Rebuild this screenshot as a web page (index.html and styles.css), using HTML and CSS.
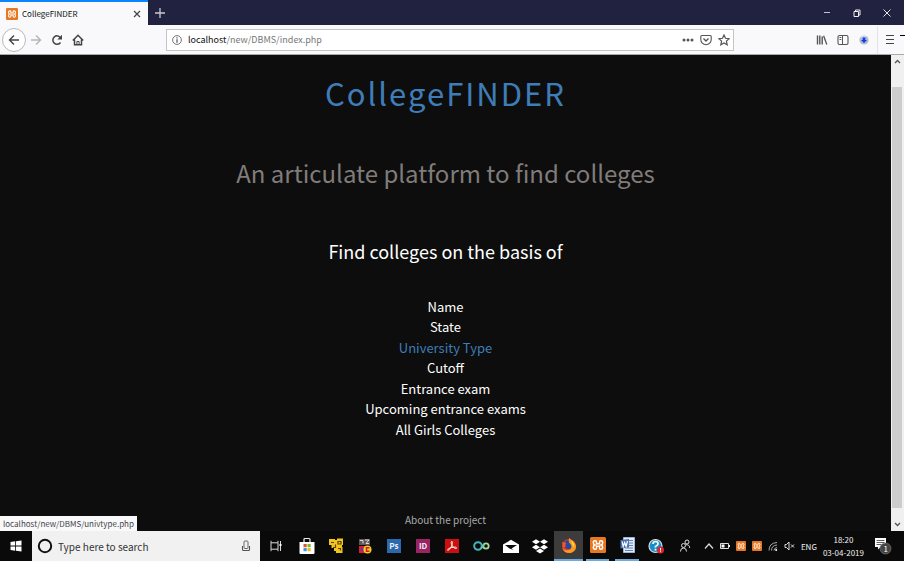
FILE: index.html
```html
<!DOCTYPE html>
<html lang="en">
<head>
<meta charset="utf-8">
<title>CollegeFINDER</title>
<link rel="stylesheet" href="styles.css">
</head>
<body>
<svg class="defs" aria-hidden="true">
  <symbol id="xampp" viewBox="0 0 16 16">
    <rect width="16" height="16" rx="1.500" fill="#e87722"/>
    <path d="M6.500 6.500V5Q6.500 3.800 5.300 3.800 3.300 3.800 3.300 5.500 3.300 7.500 5 8 3.300 8.500 3.300 10.500 3.300 12.200 5.300 12.200 6.500 12.200 6.500 11V9.500Q8 8.800 9.500 9.500V11Q9.500 12.200 10.700 12.200 12.700 12.200 12.700 10.500 12.700 8.500 11 8 12.700 7.500 12.700 5.500 12.700 3.800 10.700 3.800 9.500 3.800 9.500 5V6.500Q8 7.200 6.500 6.500Z" fill="none" stroke="#fff" stroke-width="1.400"/>
  </symbol>
</svg>
<div class="desktop">
  <header class="tabbar">
    <div class="tab">
      <svg class="favicon"><use href="#xampp"/></svg>
      <span class="tab-title">CollegeFINDER</span>
      <button class="plain" aria-label="Close tab"><svg width="8" height="8" viewBox="0 0 8 8"><path d="M1 1l6 6M7 1L1 7" stroke="#444" stroke-width="1.200"/></svg></button>
    </div>
    <button class="plain new-tab" aria-label="New tab"><svg width="10" height="10" viewBox="0 0 10 10"><path d="M5 0v10M0 5h10" stroke="#c9c9d2" stroke-width="1.300"/></svg></button>
    <div class="window-buttons">
      <button class="plain" aria-label="Minimize"><svg width="8" height="8" viewBox="0 0 8 8"><path d="M1 3.500h6" stroke="#c4c4cf"/></svg></button>
      <button class="plain" aria-label="Restore"><svg width="8" height="8" viewBox="0 0 8 8"><path d="M1 2.500h4.500v5H1zM2.500 2.500v-1.500h4.500v5H5.500" fill="none" stroke="#f0f0f4"/></svg></button>
      <button class="plain" aria-label="Close"><svg width="8" height="8" viewBox="0 0 8 8"><path d="M.5.5l7 7M7.500.5l-7 7" stroke="#e4e4ec"/></svg></button>
    </div>
  </header>
  <nav class="toolbar">
    <div class="nav-buttons">
      <button class="plain back" aria-label="Back"><svg width="12" height="12" viewBox="0 0 12 12"><path d="M11 6H1.500M6 1.500L1.500 6 6 10.500" fill="none" stroke="#444" stroke-width="1.400"/></svg></button>
      <button class="plain" aria-label="Forward"><svg width="12" height="12" viewBox="0 0 12 12"><path d="M1 6h9.500M6 1.500L10.500 6 6 10.500" fill="none" stroke="#b5b5b8" stroke-width="1.400"/></svg></button>
      <button class="plain" aria-label="Reload"><svg width="12" height="12" viewBox="0 0 12 12"><path d="M9.500 8.500A4.200 4.200 0 1 1 9.600 3.800" fill="none" stroke="#444" stroke-width="1.500"/><path d="M11 .8v4.700H6.300z" fill="#444"/></svg></button>
      <button class="plain" aria-label="Home"><svg width="12" height="12" viewBox="0 0 12 12"><path d="M.8 6.500L6 1.300l5.200 5.200M2.500 5.500v5.300h7V5.500" fill="none" stroke="#444" stroke-width="1.500"/><path d="M4.900 11V7.500h2.200V11" fill="none" stroke="#444"/></svg></button>
    </div>
    <div class="urlbar">
      <svg width="10" height="10" viewBox="0 0 10 10"><circle cx="5" cy="5" r="4.400" fill="none" stroke="#666" stroke-width=".9"/><path d="M5 2.300v1.200M5 4.300v3.400" stroke="#555" stroke-width="1.200"/></svg>
      <span class="url"><b>localhost</b>/new/DBMS/index.php</span>
      <button class="plain" aria-label="Page actions"><svg width="12" height="10" viewBox="0 0 12 10"><circle cx="2" cy="5" r="1.500" fill="#555"/><circle cx="6" cy="5" r="1.500" fill="#555"/><circle cx="10" cy="5" r="1.500" fill="#555"/></svg></button>
      <button class="plain" aria-label="Save to Pocket"><svg width="12" height="12" viewBox="0 0 12 12"><path d="M1.800 1.500h8.400q1 0 1 1v3A5.200 5.200 0 0 1 .8 5.500v-3q0-1 1-1z" fill="none" stroke="#555" stroke-width="1.100"/><path d="M3.500 4.500L6 7l2.500-2.500" fill="none" stroke="#555" stroke-width="1.400"/></svg></button>
      <button class="plain" aria-label="Bookmark"><svg width="12" height="12" viewBox="0 0 12 12"><path d="M6 1l1.500 3.300 3.600.4-2.700 2.400.8 3.600L6 8.900l-3.200 1.800.8-3.600L.9 4.700l3.600-.4z" fill="none" stroke="#555" stroke-width="1.200"/></svg></button>
    </div>
    <div class="tools">
      <button class="plain" aria-label="Library"><svg width="12" height="12" viewBox="0 0 12 12"><path d="M1.500 1.500v9M3.800 1.500v9M6.200 2.500v8" stroke="#555" stroke-width="1.400"/><path d="M7.600 1.800l3.200 8.700" stroke="#555" stroke-width="1.300"/></svg></button>
      <button class="plain" aria-label="Sidebar"><svg width="12" height="12" viewBox="0 0 12 12"><rect x="1" y="1.500" width="10" height="9" rx="1.500" fill="none" stroke="#555" stroke-width="1.100"/><path d="M5.500 1.500v9M2.500 3.500h1.800M2.500 5.500h1.800" stroke="#555"/></svg></button>
      <button class="plain" aria-label="Extension"><svg width="12" height="12" viewBox="0 0 12 12"><circle cx="6" cy="6" r="4.600" fill="#a9bed2"/><path d="M3 3.500a4 4 0 0 1 5-1" stroke="#dce9f0" fill="none"/><path d="M4.700 3.500h2.600V6h1.700L6 9 3 6h1.700z" fill="#1c35e8"/></svg></button>
      <button class="plain menu" aria-label="Menu"><svg width="12" height="12" viewBox="0 0 12 12"><path d="M2 1.500h8M2 5.500h8M2 9.500h8" stroke="#444" stroke-width="1.100"/></svg></button>
    </div>
  </nav>
  <div class="viewport">
    <main class="page">
      <h1>CollegeFINDER</h1>
      <h2>An articulate platform to find colleges</h2>
      <h3>Find colleges on the basis of</h3>
      <ul class="criteria">
        <li><a href="#name">Name</a></li>
        <li><a href="#state">State</a></li>
        <li><a class="hovered" href="#type">University Type</a></li>
        <li><a href="#cutoff">Cutoff</a></li>
        <li><a href="#exam">Entrance exam</a></li>
        <li><a href="#upcoming">Upcoming entrance exams</a></li>
        <li><a href="#girls">All Girls Colleges</a></li>
      </ul>
      <a class="about" href="#about">About the project</a>
    </main>
    <div class="scrollbar">
      <svg class="up" width="7" height="5" viewBox="0 0 7 5"><path d="M1 4l2.500-2.500L6 4" fill="none" stroke="#555" stroke-width="1.300"/></svg>
      <div class="thumb"></div>
      <svg class="down" width="7" height="5" viewBox="0 0 7 5"><path d="M1 1l2.500 2.500L6 1" fill="none" stroke="#555" stroke-width="1.300"/></svg>
    </div>
    <div class="status">localhost/new/DBMS/univtype.php</div>
  </div>
  <footer class="taskbar">
    <button class="plain start" aria-label="Start"><svg width="12" height="12" viewBox="0 0 12 12"><path d="M.5 2l4.700-.7v4.300H.5zM6 1.200L11.500.5v5.100H6zM.5 6.400h4.700v4.300L.5 10zM6 6.400h5.500v5.100L6 10.800z" fill="#fff"/></svg></button>
    <label class="search">
      <svg width="16" height="16" viewBox="0 0 16 16"><circle cx="8" cy="8" r="6.200" fill="none" stroke="#111" stroke-width="2"/></svg>
      <input type="text" placeholder="Type here to search">
      <svg width="10" height="12" viewBox="0 0 10 12"><rect x="3" y="1" width="4" height="7.500" rx="1" fill="none" stroke="#666"/><path d="M1.500 6v3.500q0 1 1 1h5q1 0 1-1V6" fill="none" stroke="#555" stroke-width="1.100"/></svg>
    </label>
    <button class="plain taskview" aria-label="Task view"><svg width="12" height="12" viewBox="0 0 12 12"><path d="M1 .8v2h7v-2M1 11.200v-2h7v2M1 3v6M8 3v6M10.500 1v10" fill="none" stroke="#ddd"/><path d="M9.500 4h2v2h-2z" fill="#fff"/></svg></button>
    <div class="apps">
      <button class="plain" aria-label="Store"><svg width="16" height="18" viewBox="0 0 16 18"><path d="M5 5V2.500q0-1 1-1h4q1 0 1 1V5" fill="none" stroke="#eee" stroke-width="1.200"/><path d="M.5 5h15v11q0 1-1 1h-13q-1 0-1-1z" fill="#fff"/><path d="M4.500 7h3.200v3.200H4.500z" fill="#e8502a"/><path d="M8.500 7h3.200v3.200H8.500z" fill="#7fb92a"/><path d="M4.500 11h3.200v3.200H4.500z" fill="#2aa0e0"/><path d="M8.500 11h3.200v3.200H8.500z" fill="#f5b81e"/></svg></button>
      <button class="plain" aria-label="VMware"><svg width="16" height="18" viewBox="0 0 16 18"><path d="M1 2h6v1h2V1.500h6V8h-1v2h.5v6H8v-2H6v-3H3.500V8H1z" fill="#f3c51c"/><path d="M3 5.500h3M10 4.500h3v2.500h-3zM7.500 7.500v3H5M10 11.500h2.500v2" fill="none" stroke="#5a430b" stroke-width="1.200"/></svg></button>
      <button class="plain" aria-label="Video downloader"><svg width="14" height="18" viewBox="0 0 14 18"><path d="M1 2h11v6H1z" fill="#5f5656"/><path d="M2 3.500h3v3M7 3h4L8 6.500h3" fill="none" stroke="#ddd"/><path d="M1 9h6v7H1z" fill="#e01c2b"/><path d="M3 11h2v3H3z" fill="#234be0"/><circle cx="9.500" cy="12.500" r="4" fill="#f0d028"/><path d="M11.500 10.800H8.500v3.500h3" fill="none" stroke="#d31822" stroke-width="1.500"/></svg></button>
      <button class="plain"><span class="adobe ps">Ps</span></button>
      <button class="plain"><span class="adobe id">ID</span></button>
      <button class="plain" aria-label="Acrobat"><span class="adobe pdf"><svg width="12" height="12" viewBox="0 0 12 12"><path d="M5.500 1.500c1.500-.5 1 2 .4 3.800S3.500 10 2 10.300c-1.500 0 .5-2.200 4-2.900s5-.2 4.500.8S7.500 8 6.300 5.900 4.800 2 5.500 1.500z" fill="none" stroke="#fff" stroke-width=".9"/></svg></span></button>
      <button class="plain" aria-label="Webex"><svg width="17" height="14" viewBox="0 0 17 14"><circle cx="5" cy="7" r="3.800" fill="none" stroke="#43b3bd" stroke-width="2"/><circle cx="13" cy="7" r="2.700" fill="none" stroke="#a5d79a" stroke-width="1.800"/><path d="M8 9.500l3-4" stroke="#71c5a8" stroke-width="1.800"/></svg></button>
      <button class="plain" aria-label="Mail"><svg width="16" height="15" viewBox="0 0 16 15"><path d="M0 5.500L8 .8l8 4.700V14H0z" fill="#fff"/><path d="M2 6h12L8.500 9.500 10.500 11 6.500 9.500z" fill="#0d0d0d"/></svg></button>
      <button class="plain" aria-label="Dropbox"><svg width="16" height="15" viewBox="0 0 16 15"><path d="M4 .3l4 2.500-4 2.500L0 2.800zM12 .3l4 2.500-4 2.500-4-2.500zM4 5.700l4 2.500-4 2.500L0 8.200zM12 5.700l4 2.500-4 2.500-4-2.500zM8 9.600l4 2.400-4 2.500L4 12z" fill="#fff"/></svg></button>
      <button class="plain active running" aria-label="Firefox"><svg width="16" height="17" viewBox="0 0 16 17"><circle cx="8" cy="9" r="7" fill="#e8382c"/><circle cx="7.500" cy="7.500" r="4.600" fill="#28479e"/><path d="M8.300.7c.6 2 5.900 3.500 6.700 8 .5 4.300-3 7.300-6.800 7.300-3.500 0-6-2-6.800-5 2.100 2.700 6 3 8 1.200 1.900-1.800 1-4.500-.5-5.700S7.500 3 8.300.7z" fill="#f99b1e"/><path d="M10.500 3.500c2.500 2 3.300 4.500 2.300 7-.8-3-2.600-4-2.300-7z" fill="#ffdf3d"/><path d="M1.200 5c1.500-.3 2.600.7 4.300 1-1.200.9-1.500 2.300-.7 3.500L2 10.500z" fill="#f05b25"/></svg></button>
      <button class="plain running" aria-label="XAMPP"><svg class="app-xampp"><use href="#xampp"/></svg></button>
      <button class="plain running" aria-label="Word"><svg width="15" height="16" viewBox="0 0 15 16"><path d="M3.500.5h11v15h-11z" fill="#e3ebf6" stroke="#9db4d8"/><path d="M9 3.500h4M9 6h4M9 8.500h4M5 11h8M5 13.500h8" stroke="#5f83bd" stroke-width="1.200"/><path d="M.5 3L9 2v8.500L.5 11.500z" fill="#4a73b5"/><path d="M2.200 4.500l1 5 1.500-4 1.400 4L7.500 4" fill="none" stroke="#fff" stroke-width="1.200"/></svg></button>
      <button class="plain" aria-label="Help"><svg width="17" height="17" viewBox="0 0 17 17"><circle cx="7.500" cy="8" r="6.500" fill="#168fc9" stroke="#ddd" stroke-width="1.200"/><path d="M5 6q0-2.500 2.500-2.500T10 5.700q0 1.200-1.500 2T7.500 9.500M7.500 10.800v1.700" fill="none" stroke="#fff" stroke-width="1.700"/><circle cx="12.500" cy="12" r="3.500" fill="#dc2330"/><path d="M12.500 10v2.500M12.500 13.200v1" stroke="#fff"/></svg></button>
      <button class="plain" aria-label="People"><svg width="12" height="14" viewBox="0 0 12 14"><circle cx="4.500" cy="6.500" r="2" fill="none" stroke="#ddd"/><path d="M1.500 12.500q0-3.500 3-3.500t3 3.500" fill="none" stroke="#ddd"/><circle cx="8" cy="3" r="2" fill="none" stroke="#ddd"/><path d="M7 5.800q3.500-.5 3.700 3.200" fill="none" stroke="#ddd"/></svg></button>
    </div>
    <div class="tray">
      <svg width="10" height="8" viewBox="0 0 10 8"><path d="M1 6.500l4-4.500 4 4.500" fill="none" stroke="#ddd" stroke-width="1.200"/></svg>
      <svg width="10" height="8" viewBox="0 0 10 8"><path d="M.5 1.500h8v5h-8z" fill="none" stroke="#ddd"/><path d="M1.500 2.500h3v3h-3zM9 3h1v2H9z" fill="#fff"/></svg>
      <svg class="tray-xampp"><use href="#xampp"/></svg>
      <svg class="tray-xampp"><use href="#xampp"/></svg>
      <svg width="10" height="10" viewBox="0 0 10 10"><path d="M1 9.500Q1 2 9 1.500M3.500 9.500Q3.500 4.500 9 4M6 9.500Q6 7 9 6.500" fill="none" stroke="#aaa"/><circle cx="8.200" cy="9" r="1" fill="#fff"/></svg>
      <svg width="11" height="10" viewBox="0 0 11 10"><path d="M1 3.500h1.500L5 1v8L2.500 6.500H1zM7 3.500l3 3M10 3.500l-3 3" fill="none" stroke="#ddd"/></svg>
      <span class="lang">ENG</span>
      <div class="clock"><span>18:20</span><span>03-04-2019</span></div>
      <button class="plain notices" aria-label="Notifications"><svg width="18" height="18" viewBox="0 0 18 18"><path d="M1 1h11v9H6.500L4 12.500V10H1z" fill="#fff"/><path d="M2.500 3.500h8M2.500 5.500h8M2.500 7.500h5" stroke="#333" stroke-width=".8"/><circle cx="11.500" cy="11.500" r="5.500" fill="#444" stroke="#777" stroke-width=".7"/></svg><span class="count">1</span></button>
    </div>
  </footer>
  <div class="edge-mark"></div>
</div>
</body>
</html>
```
FILE: styles.css
```css
* { box-sizing: border-box; }

body {
  margin: 0;
  background: #fff;
  font-family: "Noto Sans CJK SC", sans-serif;
}

svg { display: block; flex: none; }
a { color: inherit; text-decoration: none; }
.defs { position: absolute; width: 0; height: 0; }

.plain {
  display: flex;
  align-items: center;
  justify-content: center;
  padding: 0;
  border: 0;
  background: none;
  font: inherit;
}

.desktop {
  position: relative;
  display: flex;
  flex-direction: column;
  height: 100vh;
  padding: 0 1px 1px 0;
}

/* Browser chrome */
.tabbar {
  display: flex;
  height: 25px;
  background: #20223f;
}
.tab {
  display: flex;
  align-items: center;
  gap: 4px;
  width: 148px;
  padding: 0 7px 0 6px;
  border-top: 2px solid #0a84ff;
  background: #f9f9fb;
}
.favicon { width: 12px; height: 12px; }
.tab-title {
  flex: 1;
  font-size: 8px;
  color: #111;
}
.new-tab { width: 24px; }
.window-buttons {
  display: flex;
  margin-left: auto;
  padding-right: 2px;
}
.window-buttons .plain { width: 30px; }

.toolbar {
  display: flex;
  align-items: center;
  height: 30px;
  border-bottom: 1px solid #aaa;
  background: #f9f9fb;
}
.nav-buttons {
  display: flex;
  align-items: center;
  gap: 9px;
  padding-left: 2px;
}
.back {
  width: 24px;
  height: 24px;
  border: 1px solid #b8b8b8;
  border-radius: 50%;
  background: #fff;
}
.nav-buttons .back { margin-right: -5px; }
.urlbar {
  display: flex;
  align-items: center;
  gap: 6px;
  flex: 0 1 568px;
  height: 22px;
  margin: 0 auto;
  padding: 0 3px 0 5px;
  border: 1px solid #c4c4c6;
  background: #fff;
}
.url {
  flex: 1;
  font-size: 9px;
  color: #777;
}
.url b { font-weight: 400; color: #111; }
.tools {
  display: flex;
  align-items: center;
  gap: 9px;
}
.menu {
  height: 28px;
  margin-left: -2px;
  padding: 0 8px 0 6px;
  border-left: 1px solid #e4e4e6;
}

/* Web page */
.viewport {
  position: relative;
  display: flex;
  flex: 1;
  min-height: 0;
}
.page {
  display: flex;
  flex: 1;
  flex-direction: column;
  align-items: center;
  padding: 18px 0 3px;
  background: #0d0d0d;
  color: #fff;
}
h1, h2, h3 { margin: 0; font-weight: 400; }
h1 {
  font-size: 31px;
  line-height: 40px;
  letter-spacing: 2px;
  color: #3f7db8;
}
h2 {
  margin-top: 40px;
  font-size: 24px;
  line-height: 40px;
  color: #807c7a;
}
h3 {
  margin-top: 43px;
  font-size: 18px;
  line-height: 30px;
}
.criteria {
  display: grid;
  grid-auto-rows: 1fr;
  height: 143px;
  margin: 31px 0 0;
  padding: 0;
  list-style: none;
  text-align: center;
  font-size: 13px;
  line-height: 20px;
}
.hovered { color: #3f7db8; }
.about {
  margin-top: auto;
  font-size: 10px;
  line-height: 16px;
  color: #aaa;
}
.scrollbar {
  display: flex;
  flex-direction: column;
  width: 13px;
  padding-left: 1px;
  background: #f0f0f0;
}
.up { margin: 4px 2px 23px; }
.thumb {
  flex: 1;
  width: 10px;
  background: #cdcdcd;
}
.down { margin: 14px 2px 4px; }
.status {
  position: absolute;
  bottom: 0;
  left: 0;
  padding: 0 3px;
  background: #f9f9fb;
  color: #444;
  font-size: 8px;
  line-height: 15px;
}

/* Taskbar */
.taskbar {
  display: flex;
  height: 30px;
  background: #0a0a0a;
  color: #eee;
}
.start { width: 32px; }
.search {
  display: flex;
  align-items: center;
  gap: 5px;
  width: 228px;
  padding: 0 9px 0 5px;
  background: #f1f1f1;
}
.search input {
  flex: 1;
  min-width: 0;
  padding: 0;
  border: 0;
  background: none;
  font: 10px "Noto Sans CJK SC", sans-serif;
}
.search input::placeholder { color: #333; opacity: 1; }
.taskview { width: 32px; }
.apps {
  display: grid;
  flex: 1;
  grid-template-columns: repeat(14, 1fr);
}
.running { border-bottom: 2px solid #6cabe0; }
.running:not(.active) { margin: 0 3px; }
.active { background: #3c3c3c; }
.app-xampp { width: 16px; height: 16px; }
.adobe {
  display: flex;
  align-items: center;
  justify-content: center;
  width: 14px;
  height: 14px;
  color: #e8f0f8;
  font-size: 8px;
  font-weight: 700;
  line-height: 14px;
}
.ps { background: #2b68ae; }
.id { background: #9a2462; }
.pdf { background: #c9100f; }
.tray {
  display: flex;
  align-items: center;
  gap: 6px;
  padding-right: 12px;
  padding-left: 4px;
}
.tray-xampp { width: 10px; height: 10px; }
.lang,
.clock { font-size: 8px; }
.clock {
  display: flex;
  flex-direction: column;
  align-items: center;
  line-height: 13px;
}
.notices { position: relative; margin-left: 4px; }
.count {
  position: absolute;
  right: 4px;
  bottom: 2px;
  color: #fff;
  font-size: 8px;
  line-height: 9px;
}
.edge-mark {
  position: absolute;
  top: 35px;
  right: 0;
  width: 5px;
  height: 1px;
  background: #000;
}
```
